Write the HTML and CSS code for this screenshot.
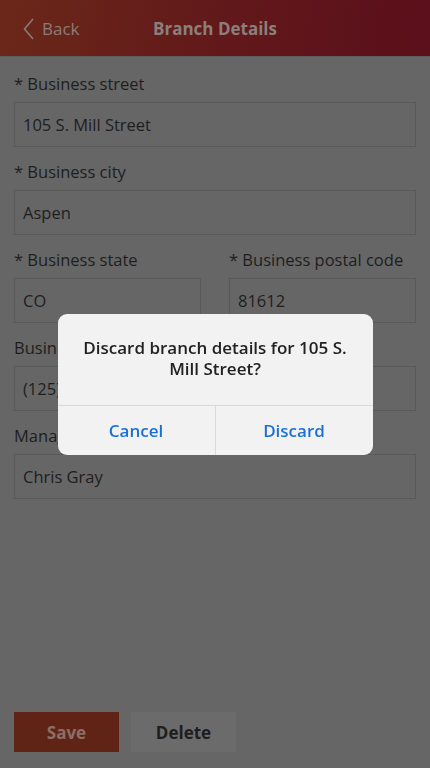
FILE: index.html
```html
<!DOCTYPE html>
<html lang="en">
<head>
    <meta charset="UTF-8">
    <meta name="viewport" content="width=device-width, initial-scale=1.0">
    <title>Branch Details</title>
    <link rel="stylesheet" href="styles.css">
</head>
<body>
    <div class="app">
        <div class="topbar">
            <div class="back">
                <svg width="12" height="22" viewBox="0 0 12 22"><path d="M10 1 L1.5 11 L10 21" fill="none" stroke="#8a7a77" stroke-width="1.6"/></svg>
                <span>Back</span>
            </div>
            <h1>Branch Details</h1>
        </div>
        <div class="form">
            <div class="field">
                <label>* Business street</label>
                <div class="input">105 S. Mill Street</div>
            </div>
            <div class="field">
                <label>* Business city</label>
                <div class="input">Aspen</div>
            </div>
            <div class="row">
                <div class="field">
                    <label>* Business state</label>
                    <div class="input">CO</div>
                </div>
                <div class="field">
                    <label>* Business postal code</label>
                    <div class="input">81612</div>
                </div>
            </div>
            <div class="field">
                <label>Business phone</label>
                <div class="input">(125) 555-0132</div>
            </div>
            <div class="field">
                <label>Manager name</label>
                <div class="input">Chris Gray</div>
            </div>
        </div>
        <div class="actions">
            <button class="btn save">Save</button>
            <button class="btn delete">Delete</button>
        </div>
    </div>
    <div class="scrim">
        <div class="dialog">
            <p>Discard branch details for 105 S. Mill Street?</p>
            <div class="dialog-btns">
                <button>Cancel</button>
                <button>Discard</button>
            </div>
        </div>
    </div>
</body>
</html>
```
FILE: styles.css
```css
body,p,h1{margin:0;padding:0;}
body{
    background:#666;
    font-family:"Open Sans","Noto Sans",sans-serif;
    color:#1e1e1e;
}
.app{
    display:flex;
    flex-direction:column;
    height:768px;
}
.topbar{
    position:relative;
    height:57px;
    display:flex;
    align-items:center;
    justify-content:center;
    background:linear-gradient(100deg,#6b2819 0%,#62191a 50%,#5a0f1a 100%);
    border-bottom:1px solid #5e5e5e;
    box-sizing:border-box;
}
.back{
    position:absolute;
    left:23px;
    top:17px;
    display:flex;
    align-items:center;
    gap:7px;
    color:#8a7d7a;
    font-size:17px;
}
.topbar h1{
    font-size:17px;
    font-weight:700;
    color:#8a7f7d;
}
.form{
    padding:15px 14px 0;
}
.field{
    margin-bottom:13px;
}
.field label{
    display:block;
    font-size:16.5px;
    line-height:24px;
    margin-bottom:6px;
}
.input{
    height:45px;
    box-sizing:border-box;
    border:1px solid #595959;
    padding:0 8px;
    line-height:43px;
    font-size:16.5px;
}
.row{
    display:grid;
    grid-template-columns:187px 187px;
    justify-content:space-between;
}
.actions{
    margin-top:auto;
    display:flex;
    gap:12px;
    padding:0 14px 16px;
}
.btn{
    width:105px;
    height:40px;
    border:none;
    font-family:inherit;
    font-size:17px;
    font-weight:700;
}
.save{
    background:#5f2416;
    color:#8c6e66;
}
.delete{
    background:#6b6b6b;
    color:#1e1e1e;
}
.scrim{
    position:fixed;
    left:0;
    top:0;
    right:0;
    bottom:0;
    display:flex;
    align-items:center;
    justify-content:center;
}
.dialog{
    width:315px;
    background:#f2f2f2;
    border-radius:9px;
    overflow:hidden;
}
.dialog p{
    padding:23px 20px 26px;
    text-align:center;
    font-size:17px;
    font-weight:600;
    line-height:21px;
    color:#222;
    border-bottom:1px solid #d9d9d9;
}
.dialog-btns{
    display:flex;
}
.dialog-btns button{
    flex:1;
    height:49px;
    border:none;
    background:none;
    font-family:inherit;
    font-size:17px;
    font-weight:600;
    color:#1a70d8;
}
.dialog-btns button + button{
    border-left:1px solid #d9d9d9;
}
```
